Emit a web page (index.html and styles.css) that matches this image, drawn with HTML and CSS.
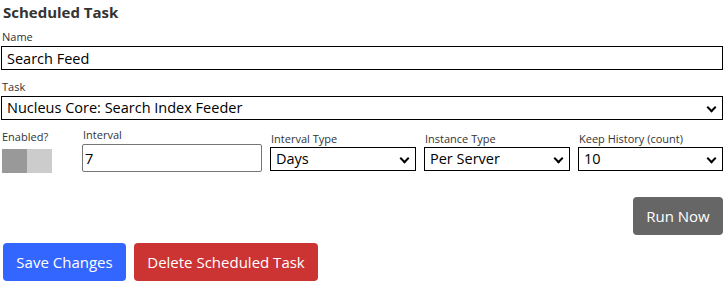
FILE: index.html
```html
<!DOCTYPE html>
<html>
<head>
	<meta charset="utf-8">
	<title>Scheduled Task</title>
	<link rel="stylesheet" href="styles.css">
</head>
<body>
	<main class="task-form">
		<h1>Scheduled Task</h1>

		<div class="field">
			<label>Name</label>
			<input class="text-box" type="text" value="Search Feed">
		</div>

		<div class="field task">
			<label>Task</label>
			<div class="select-box">Nucleus Core: Search Index Feeder</div>
		</div>

		<div class="field-row">
			<div class="field enabled">
				<label>Enabled?</label>
				<div class="toggle"><span class="on"></span><span class="off"></span></div>
			</div>
			<div class="field interval">
				<label>Interval</label>
				<input class="number-box" type="text" value="7">
			</div>
			<div class="field">
				<label class="low">Interval Type</label>
				<div class="select-box">Days</div>
			</div>
			<div class="field">
				<label class="low">Instance Type</label>
				<div class="select-box">Per Server</div>
			</div>
			<div class="field">
				<label class="low">Keep History (count)</label>
				<div class="select-box">10</div>
			</div>
		</div>

		<div class="run-row">
			<button class="btn btn-grey">Run Now</button>
		</div>

		<div class="actions">
			<button class="btn btn-blue">Save Changes</button>
			<button class="btn btn-red">Delete Scheduled Task</button>
		</div>
	</main>
</body>
</html>
```

FILE: styles.css
```css
* {
	margin: 0;
	box-sizing: border-box;
}

body {
	font-family: "Open Sans", "Noto Sans", sans-serif;
	color: #212529;
	background: #fff;
}

.task-form {
	padding: 3px 5px 0 1px;
}

h1 {
	font-size: 15px;
	font-weight: bold;
	color: #333;
	padding-left: 2px;
	line-height: 18px;
	margin-bottom: 9px;
}

.field {
	display: flex;
	flex-direction: column;
	margin-bottom: 10px;
}

.field.task {
	margin-bottom: 8px;
}

.field label {
	font-size: 11px;
	line-height: 14px;
	color: #333;
	padding-left: 1px;
	margin-bottom: 2px;
}

.text-box {
	font-family: inherit;
	font-size: 14.5px;
	height: 24px;
	padding: 0 5px;
	border: 1px solid #000;
	border-radius: 0;
	outline: none;
	color: #000;
}

.select-box {
	position: relative;
	font-size: 14.5px;
	height: 24px;
	line-height: 22px;
	padding: 0 24px 0 5px;
	border: 1px solid #000;
	color: #000;
	white-space: nowrap;
	overflow: hidden;
}

.select-box::after {
	content: "";
	position: absolute;
	right: 7px;
	top: 7px;
	width: 5px;
	height: 5px;
	border-right: 2px solid #000;
	border-bottom: 2px solid #000;
	transform: rotate(45deg);
}

.field-row {
	display: grid;
	grid-template-columns: 73px 180px 146px 146px 1fr;
	column-gap: 8px;
}

.field-row .field {
	margin-bottom: 0;
}

.field-row label {
	margin-bottom: 1px;
}

.enabled label {
	margin-top: 2px;
	margin-bottom: 5px;
}

.toggle {
	display: flex;
	width: 50px;
	height: 24px;
	margin-left: 1px;
}

.toggle span {
	flex: 1;
}

.toggle .on {
	background: #999;
}

.toggle .off {
	background: #ccc;
}

.interval label {
	margin-bottom: 2px;
}

.number-box {
	font-family: inherit;
	font-size: 14.5px;
	height: 28px;
	padding: 0 2px;
	border: 1px solid #767676;
	border-radius: 2px;
	outline: none;
	color: #000;
}

.field .low {
	margin-top: 4px;
}

.run-row {
	display: flex;
	justify-content: flex-end;
	margin-top: 24px;
}

.btn {
	font-family: inherit;
	font-size: 15px;
	color: #fff;
	border: none;
	border-radius: 4px;
	height: 38px;
	padding: 0;
	text-align: center;
	cursor: pointer;
}

.btn-grey {
	background: #666;
	width: 90px;
}

.btn-blue {
	background: #3366ff;
	width: 123px;
}

.btn-red {
	background: #cc3333;
	width: 184px;
}

.actions {
	display: flex;
	gap: 8px;
	margin-top: 8px;
	padding-left: 2px;
}
```
